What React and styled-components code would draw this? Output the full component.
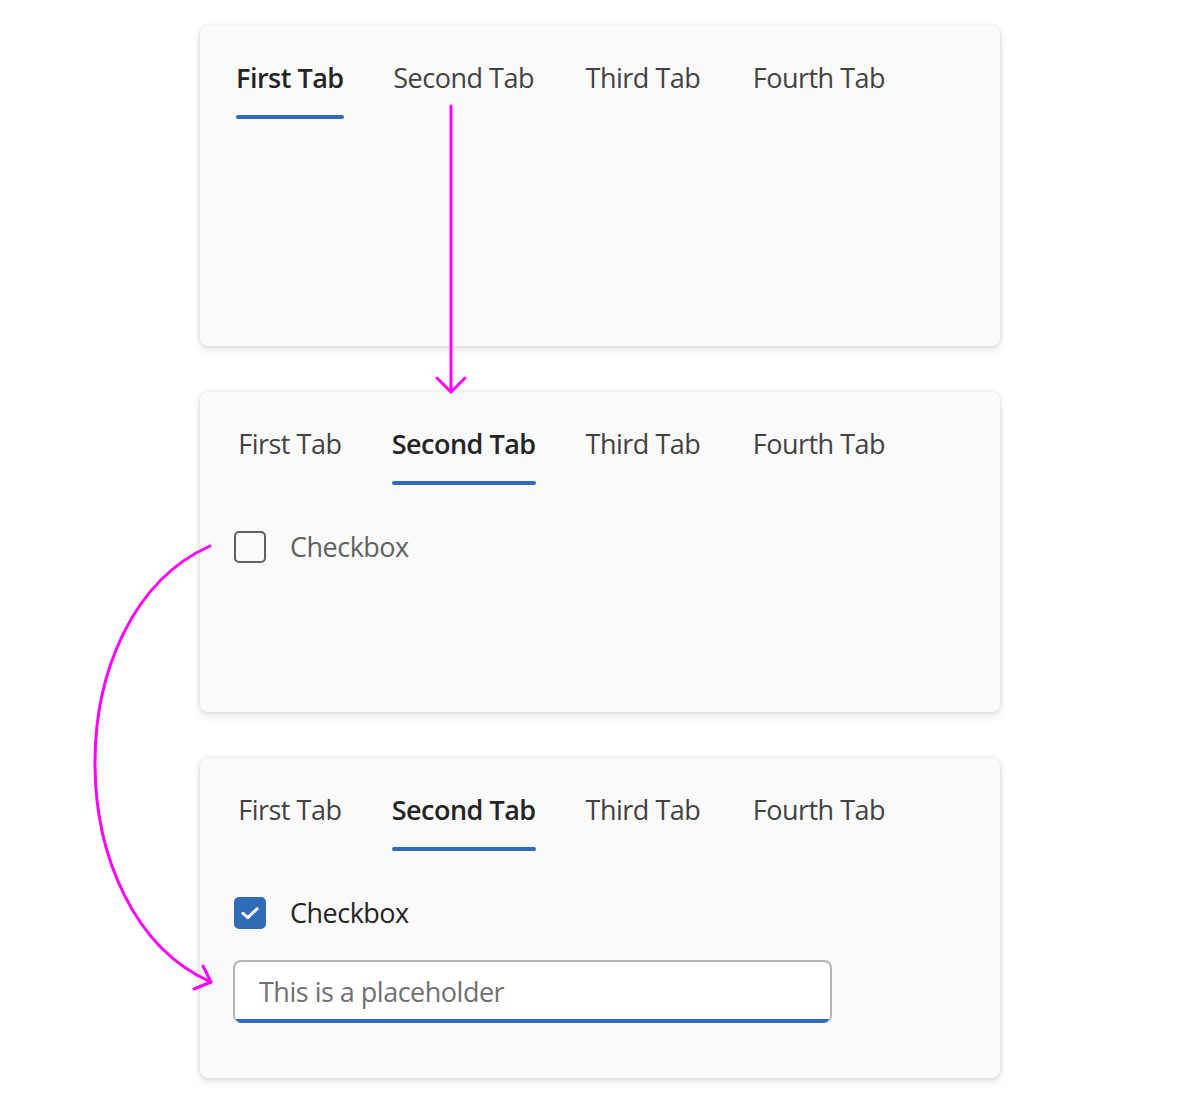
import React from "react";
import styled, { createGlobalStyle } from "styled-components";

const Global = createGlobalStyle`
  html, body { margin: 0; padding: 0; background: #ffffff; }
  body { font-family: "Open Sans", "Noto Sans", sans-serif; }
  * { box-sizing: border-box; }
`;

const BLUE = "#2f6bb7";

const Page = styled.div`
  position: relative;
  width: 1200px;
  min-height: 1120px;
  padding-top: 26px;
  display: flex;
  flex-direction: column;
  align-items: center;
  gap: 46px;
`;

const Card = styled.section`
  width: 800px;
  height: 320px;
  background: #fafafa;
  border-radius: 8px;
  box-shadow: 0 0 4px rgba(0, 0, 0, 0.12), 0 4px 8px rgba(0, 0, 0, 0.1);
  padding: 12px 12px;
  display: flex;
  flex-direction: column;
`;

const TabList = styled.div`
  display: flex;
  align-items: flex-start;
`;

const Tab = styled.button`
  position: relative;
  border: none;
  background: transparent;
  padding: 20px 24px 24px;
  margin: 0;
  font-family: inherit;
  font-size: 27px;
  letter-spacing: -0.5px;
  line-height: 40px;
  color: ${(p) => (p.$selected ? "#242424" : "#424242")};
  font-weight: ${(p) => (p.$selected ? 600 : 400)};
  display: inline-grid;
  justify-items: center;
  cursor: pointer;
`;

const TabLabel = styled.span`
  grid-area: 1 / 1;
  white-space: nowrap;
`;

const TabReserve = styled.span`
  grid-area: 1 / 1;
  font-weight: 600;
  visibility: hidden;
  white-space: nowrap;
`;

const Indicator = styled.span`
  position: absolute;
  left: 24px;
  right: 24px;
  bottom: 3px;
  height: 4px;
  border-radius: 2px;
  background: ${BLUE};
`;

const Panel = styled.div`
  padding: 39px 22px 0;
  display: flex;
  flex-direction: column;
  gap: 27px;
`;

const CheckRow = styled.label`
  display: flex;
  align-items: center;
  gap: 24px;
  font-size: 27px;
  letter-spacing: -0.5px;
  line-height: 40px;
  color: ${(p) => (p.$checked ? "#242424" : "#616161")};
  cursor: pointer;
`;

const Box = styled.span`
  width: 32px;
  height: 32px;
  border-radius: 5px;
  border: 2px solid ${(p) => (p.$checked ? BLUE : "#616161")};
  background: ${(p) => (p.$checked ? BLUE : "transparent")};
  display: flex;
  align-items: center;
  justify-content: center;
  flex: none;
`;

const InputWrap = styled.div`
  width: 599px;
  height: 63px;
  margin-left: -1px;
  border: 2px solid #b3b3b3;
  border-bottom: none;
  border-radius: 8px;
  background: #ffffff;
  overflow: hidden;
  position: relative;
  display: flex;
  align-items: center;
  &::after {
    content: "";
    position: absolute;
    left: 0;
    right: 0;
    bottom: 0;
    height: 4px;
    background: ${BLUE};
  }
`;

const Field = styled.input`
  border: none;
  outline: none;
  background: transparent;
  width: 100%;
  padding: 0 0 2px 24px;
  font-family: inherit;
  font-size: 27px;
  letter-spacing: -0.5px;
  line-height: 40px;
  color: #242424;
  &::placeholder {
    color: #707070;
    opacity: 1;
  }
`;

const Overlay = styled.svg`
  position: absolute;
  left: 0;
  top: 0;
  pointer-events: none;
`;

const TABS = ["First Tab", "Second Tab", "Third Tab", "Fourth Tab"];

function Tabs({ selected }) {
  return (
    <TabList>
      {TABS.map((t, i) => (
        <Tab key={t} $selected={i === selected}>
          <TabReserve>{t}</TabReserve>
          <TabLabel>{t}</TabLabel>
          {i === selected && <Indicator />}
        </Tab>
      ))}
    </TabList>
  );
}

function Checkbox({ checked }) {
  return (
    <CheckRow $checked={checked}>
      <Box $checked={checked}>
        {checked && (
          <svg width="20" height="20" viewBox="0 0 20 20">
            <path
              d="M3 10.3 L7.8 14.6 L17 5.8"
              fill="none"
              stroke="#ffffff"
              strokeWidth="3"
              strokeLinecap="round"
              strokeLinejoin="round"
            />
          </svg>
        )}
      </Box>
      Checkbox
    </CheckRow>
  );
}

export default function App() {
  return (
    <>
      <Global />
      <Page>
        <Card>
          <Tabs selected={0} />
        </Card>
        <Card>
          <Tabs selected={1} />
          <Panel>
            <Checkbox checked={false} />
          </Panel>
        </Card>
        <Card>
          <Tabs selected={1} />
          <Panel>
            <Checkbox checked={true} />
            <InputWrap>
              <Field placeholder="This is a placeholder" />
            </InputWrap>
          </Panel>
        </Card>
        <Overlay width="1200" height="1120" viewBox="0 0 1200 1120">
          <g fill="none" stroke="#ff00ff" strokeWidth="3" strokeLinecap="round" strokeLinejoin="round">
            <path d="M451 106 L451 391" />
            <path d="M437 378 L451 392 L465 378" />
            <path d="M210 546 C 55 615, 58 915, 211 982" />
            <path d="M203 966 L211 982 L194 989" />
          </g>
        </Overlay>
      </Page>
    </>
  );
}
